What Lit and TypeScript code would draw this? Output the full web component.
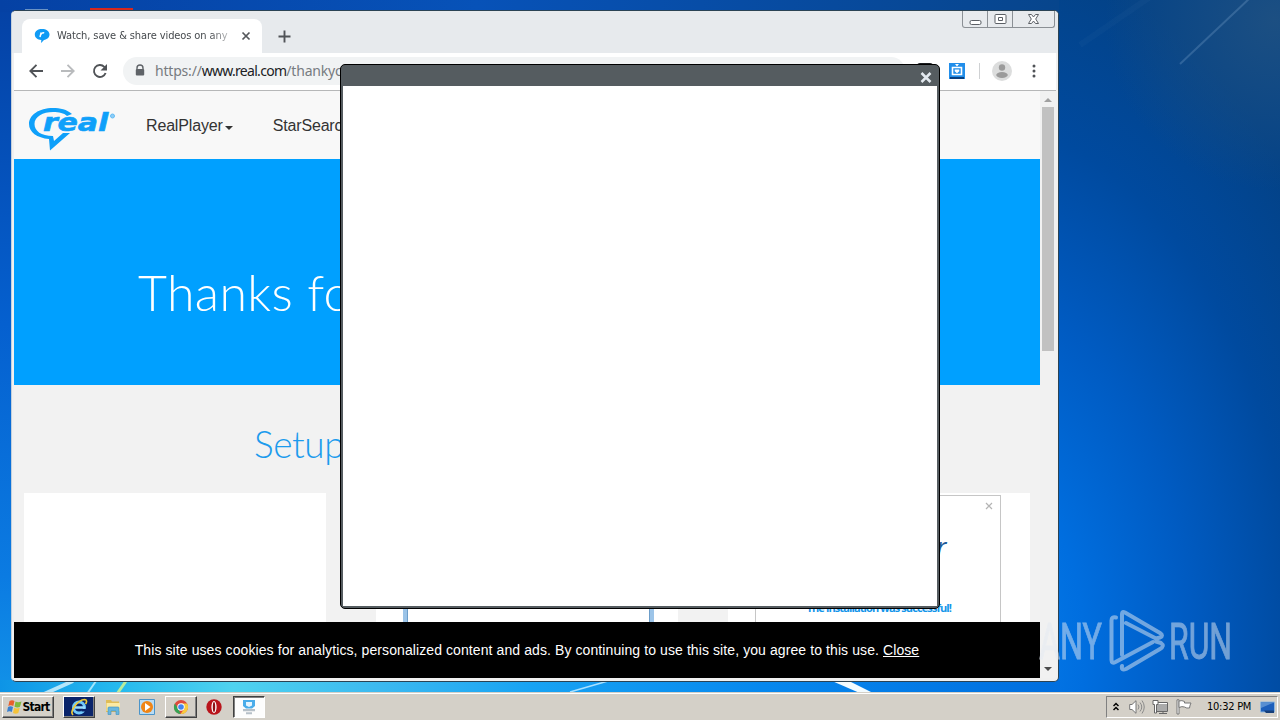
import { css, html, LitElement, svg } from "lit";
import { customElement } from "lit/decorators.js";

const backIcon = svg`<path d="M14 7H1.500M7.500 .8 1.300 7l6.200 6.200" fill="none" stroke="currentColor" stroke-width="1.900" />`;
const forwardIcon = svg`<path d="M0 7h12.500M6.500 .8 12.700 7l-6.200 6.200" fill="none" stroke="currentColor" stroke-width="1.900" />`;

@customElement("desktop-wallpaper")
class DesktopWallpaper extends LitElement {
  static override styles = css`
    :host,
    svg {
      display: block;
    }
  `;

  override render() {
    return html`
      <svg width="1280" height="720" viewBox="0 0 1280 720">
        <defs>
          <radialGradient id="base" gradientUnits="userSpaceOnUse" cx="0" cy="0" r="1" gradientTransform="translate(980 650) scale(420 700)">
            <stop offset="0" stop-color="#0780ee" />
            <stop offset=".25" stop-color="#006edf" />
            <stop offset=".5" stop-color="#005bc2" />
            <stop offset=".75" stop-color="#004a9f" />
            <stop offset="1" stop-color="#034287" />
          </radialGradient>
          <radialGradient id="corner" gradientUnits="userSpaceOnUse" cx="1275" cy="20" r="170">
            <stop offset="0" stop-color="#1c4f82" />
            <stop offset="1" stop-color="#1c4f82" stop-opacity="0" />
          </radialGradient>
          <linearGradient id="left" x2="0" y2="1">
            <stop offset="0" stop-color="#0541a4" />
            <stop offset=".45" stop-color="#0560cf" />
            <stop offset=".8" stop-color="#0b7be2" />
            <stop offset="1" stop-color="#1397e9" />
          </linearGradient>
          <linearGradient id="top">
            <stop offset="0" stop-color="#0541a4" />
            <stop offset=".45" stop-color="#0752b8" />
            <stop offset="1" stop-color="#07458c" />
          </linearGradient>
          <linearGradient id="bottom">
            <stop offset="0" stop-color="#0d94e6" />
            <stop offset=".11" stop-color="#25b9ee" />
            <stop offset=".22" stop-color="#4fd2ef" />
            <stop offset=".36" stop-color="#3cb9f0" />
            <stop offset=".5" stop-color="#18a3f3" />
            <stop offset=".72" stop-color="#0788ee" />
            <stop offset="1" stop-color="#006edf" />
          </linearGradient>
        </defs>
        <rect width="1280" height="720" fill="url(#base)" />
        <rect x="1000" width="280" height="300" fill="url(#corner)" />
        <rect width="14" height="720" fill="url(#left)" />
        <rect width="1059" height="12" fill="url(#top)" />
        <rect y="680" width="1060" height="14" fill="url(#bottom)" />
        <path d="M1180 64 1251-3" stroke="#7fa6cc" stroke-opacity=".3" stroke-width="2" />
        <path d="M1080 45 1150-3" stroke="#7fa6cc" stroke-opacity=".05" stroke-width="6" />
        <path d="M44 694 73 681" stroke="#e8fbff" stroke-width="4" stroke-opacity=".75" />
        <path d="m87 694 9-13" stroke="#c4f3ff" stroke-width="2" stroke-opacity=".8" />
        <path d="m117 694 9-13" stroke="#b9ec9d" stroke-width="3" />
        <path d="m570 692 38-11" stroke="#a9e0ff" stroke-width="1.500" />
        <path d="M832 681h17l26 13h-13z" fill="#f2fbff" />
        <rect x="90" y="8" width="43" height="3" fill="#d8281d" />
        <rect x="25" y="9" width="23" height="1" fill="#6b93c4" />
      </svg>
    `;
  }
}

@customElement("browser-window")
class BrowserWindow extends LitElement {
  static override styles = css`
    :host {
      display: block;
      box-sizing: border-box;
      width: 1048px;
      height: 672px;
      padding: 0 2px 3px;
      border: 1px solid #2b4354;
      border-left-color: #c3d0dc;
      border-radius: 5px;
      background: #f0f0f0;
      overflow: hidden;
      font-family: "Liberation Sans", Arial, sans-serif;
    }

    svg {
      display: block;
      flex: none;
    }

    .tabs {
      display: flex;
      align-items: flex-end;
      height: 42px;
      margin: 0 -2px;
      padding-left: 2px;
      background: #e7eaed;
    }

    .tab {
      display: flex;
      align-items: center;
      box-sizing: border-box;
      width: 240px;
      height: 34px;
      margin-left: 8px;
      padding: 0 10px 0 12px;
      border-radius: 8px 8px 0 0;
      background: #fff;
    }

    .title {
      width: 173px;
      margin-left: 7px;
      margin-right: 11px;
      overflow: hidden;
      white-space: nowrap;
      color: #45494d;
      font: 11px/16px "DejaVu Sans Condensed", "DejaVu Sans", sans-serif;
      letter-spacing: -0.1px;
      -webkit-mask-image: linear-gradient(90deg, #000 88%, rgba(0, 0, 0, 0.3));
    }

    .plus {
      margin: 0 0 10px 16px;
    }

    .controls {
      display: flex;
      align-self: flex-start;
      box-sizing: border-box;
      height: 17px;
      margin-left: auto;
      margin-right: 3px;
      border: 1px solid #8b9095;
      border-top: 0;
      border-radius: 0 0 3px 3px;
    }

    .controls span {
      display: grid;
      place-items: center;
      width: 24px;
    }

    .controls span + span {
      border-left: 1px solid #8b9095;
    }

    .controls .quit {
      width: 41px;
    }

    .toolbar {
      display: flex;
      align-items: center;
      box-sizing: border-box;
      height: 38px;
      padding: 0 16px 2px 15px;
      border-bottom: 1px solid #b6b7b8;
      background: #fff;
      color: #505357;
    }

    .toolbar .forward {
      margin-left: 18px;
      color: #b9bbbd;
    }

    .toolbar .reload {
      margin-left: 17px;
    }

    .address {
      display: flex;
      align-items: center;
      box-sizing: border-box;
      width: 782px;
      height: 28px;
      margin-left: 15px;
      padding-left: 11px;
      border-radius: 14px;
      background: #f1f3f4;
      color: #777b80;
      font: 14px/20px "Noto Sans", sans-serif;
      letter-spacing: -0.2px;
      white-space: nowrap;
      overflow: hidden;
    }

    .address span {
      margin-left: 9px;
    }

    .address b {
      color: #202124;
      font-weight: 400;
      letter-spacing: -0.7px;
    }

    .black {
      width: 16px;
      height: 16px;
      margin-left: 12px;
      border-radius: 3px;
      background: #1b1d20;
    }

    .extension {
      margin-left: 16px;
    }

    .divider {
      width: 1px;
      height: 16px;
      margin: 0 12px 0 14px;
      background: #cfd1d3;
    }

    .menu {
      margin-left: 20px;
    }

    .content {
      display: flex;
      height: 587px;
    }

    .page {
      display: flex;
      flex-direction: column;
      width: 1026px;
      background: #f2f2f2;
      overflow: hidden;
    }

    .nav {
      display: flex;
      align-items: center;
      flex: none;
      box-sizing: border-box;
      height: 68px;
      padding: 2px 0 0 14px;
      background: #f8f8f8;
      color: #333;
      font-size: 16px;
      letter-spacing: -0.16px;
    }

    .logo {
      margin-top: 6px;
    }

    .nav span {
      margin-left: 29px;
    }

    .nav .caret {
      width: 0;
      margin: 3px 0 0 2px;
      border: 4px solid transparent;
      border-top-color: #333;
      border-bottom: 0;
    }

    .nav .search {
      margin-left: 40px;
    }

    .hero {
      flex: none;
      box-sizing: border-box;
      height: 226px;
      padding: 103px 0 0 124px;
      background: #00a0ff;
      color: #fff;
      font: 300 50px/60px Lato, sans-serif;
      letter-spacing: 0.4px;
      white-space: nowrap;
    }

    h2 {
      flex: none;
      height: 70px;
      margin: 0;
      padding: 38px 0 0 240px;
      color: #1c9bed;
      font: 300 37px/42px Lato, sans-serif;
      letter-spacing: -0.4px;
    }

    .cards {
      display: grid;
      grid-template-columns: repeat(3, 302px);
      gap: 50px;
      height: 129px;
      padding-left: 10px;
    }

    .card {
      display: flex;
      justify-content: center;
      background: #fff;
      overflow: hidden;
    }

    .installer {
      width: 243px;
      margin-left: 2px;
      border: solid #9cc4e8;
      border-width: 0 4px;
      box-shadow: inset 1px 0 #6c9dc9, inset -1px 0 #6c9dc9;
    }

    .success {
      display: flex;
      flex-direction: column;
      box-sizing: border-box;
      width: 246px;
      margin: 2px 3px 0 0;
      border: 1px solid #c6c6c6;
      border-bottom: 0;
      color: #1596ea;
      font: 700 11px/14px "Open Sans", sans-serif;
    }

    .success .close {
      align-self: flex-end;
      margin: 6px 7px 0 0;
    }

    .success .brand {
      margin: 18px 53px 0 0;
      text-align: right;
      color: #1d5a99;
      font: italic 400 25px/36px "Open Sans", sans-serif;
    }

    .success .message {
      margin-top: 37px;
      padding-left: 51px;
      letter-spacing: -0.88px;
      white-space: nowrap;
    }

    .cookies {
      flex: none;
      height: 56px;
      background: #000;
      color: #fff;
      font-size: 14px;
      line-height: 56px;
      text-align: center;
      white-space: nowrap;
      letter-spacing: 0.092px;
    }

    .scrollbar {
      display: flex;
      flex-direction: column;
      align-items: center;
      box-sizing: border-box;
      width: 16px;
      padding: 7px 0 7px;
      background: #f1f1f1;
    }

    .thumb {
      width: 12px;
      height: 244px;
      margin: 5px 0 auto;
      background: #c1c1c1;
    }
  `;

  private renderTabs() {
    return html`
      <div class="tabs">
        <div class="tab">
          <svg width="16" height="16" viewBox="0 0 16 16">
            <path d="M8 1c4 0 7.500 2 7.500 5.500 0 3-2.500 5-5.500 5.400L7 15l.3-3C3.500 12 .8 9.700.8 6.600.8 3 4 1 8 1" fill="#109bf5" />
            <path d="m6 9 1.200-4.500M7 6.300c1-1.500 2-1.700 3.200-1.300" fill="none" stroke="#fff" stroke-width="1.500" />
          </svg>
          <span class="title">Watch, save &amp; share videos on any</span>
          <svg width="10" height="10" viewBox="0 0 10 10">
            <path d="m1.500 1.500 7 7m0-7-7 7" stroke="#55585c" stroke-width="1.700" />
          </svg>
        </div>
        <svg class="plus" width="13" height="13" viewBox="0 0 13 13">
          <path d="M6.500 .5v12m-6-6h12" stroke="#505357" stroke-width="1.900" />
        </svg>
        <div class="controls">
          <span>
            <svg width="13" height="13" viewBox="0 0 13 13">
              <rect x="1" y="7.500" width="11" height="4" rx="1.500" fill="#fff" stroke="#5c6066" />
            </svg>
          </span>
          <span>
            <svg width="13" height="11" viewBox="0 0 13 11">
              <rect x="1" y=".5" width="11" height="9" rx="1" fill="#fff" stroke="#5c6066" />
              <path d="M4.500 3.500h4v3h-4z" fill="none" stroke="#5c6066" />
            </svg>
          </span>
          <span class="quit">
            <svg width="13" height="11" viewBox="0 0 13 11">
              <path d="M1.500 .5h3l2 2.500 2-2.500h3L8.700 5l2.800 4.500h-3l-2-2.500-2 2.500h-3L4.300 5z" fill="#fff" stroke="#5c6066" />
            </svg>
          </span>
        </div>
      </div>
    `;
  }

  private renderToolbar() {
    return html`
      <div class="toolbar">
        <svg width="14" height="14" viewBox="0 0 14 14">${backIcon}</svg>
        <svg class="forward" width="14" height="14" viewBox="0 0 14 14">${forwardIcon}</svg>
        <svg class="reload" width="16" height="16" viewBox="0 0 16 16">
          <path d="M13.600 10A6 6 0 1 1 12.300 3.800L14 5.500" fill="none" stroke="currentColor" stroke-width="1.900" />
          <path d="M15 1v6.500H8.500z" fill="currentColor" />
        </svg>
        <div class="address">
          <svg width="12" height="13" viewBox="0 0 12 13">
            <path d="M3 5.500V4a3 3 0 0 1 6 0v1.500" fill="none" stroke="#5f6368" stroke-width="1.400" />
            <rect x="1.800" y="5" width="8.400" height="6.500" rx="1" fill="#5f6368" />
          </svg>
          <span>https://<b>www.real.com</b>/thankyou</span>
        </div>
        <div class="black"></div>
        <svg class="extension" width="16" height="16" viewBox="0 0 16 16">
          <path d="M0 0h16v16H0z" fill="#218eea" />
          <path d="M1 14h14v2H1z" fill="#073f80" />
          <path d="M3.500 4.500h9v7h-9z" fill="none" stroke="#fff" stroke-width="1.600" />
          <path d="m6 1 2 2.500L10 1M5.700 6.500h4.600v1.800L8 10.200 5.700 8.300z" fill="#fff" />
        </svg>
        <div class="divider"></div>
        <svg width="20" height="20" viewBox="0 0 20 20">
          <circle cx="10" cy="10" r="10" fill="#dcdddd" />
          <circle cx="10" cy="6.500" r="3.200" fill="#9b9b9b" />
          <ellipse cx="10" cy="14" rx="5.800" ry="2.900" fill="#9b9b9b" />
        </svg>
        <svg class="menu" width="4" height="14" viewBox="0 0 4 14">
          <circle cx="2" cy="2" r="1.500" fill="currentColor" />
          <circle cx="2" cy="7" r="1.500" fill="currentColor" />
          <circle cx="2" cy="12" r="1.500" fill="currentColor" />
        </svg>
      </div>
    `;
  }

  private renderLogo() {
    return html`
      <svg class="logo" width="89" height="46" viewBox="0 0 89 46">
        <path d="M44 8C39 3.500 32 2 25 2 11 2 1 9 1 18c0 8 8 14 20 15l1 11.500L42 27h-7l-9 8-1-5C13 30 6.500 25 6.500 18 6.500 10.500 15 6 25 6c6 0 11 1 14 4z" fill="#0fa0fa" />
        <text x="15" y="25" fill="#0fa0fa" stroke="#0fa0fa" stroke-width=".6" font-family="DejaVu Sans, sans-serif" font-size="25" font-weight="700" font-style="italic" textLength="65" lengthAdjust="spacingAndGlyphs">real</text>
        <circle cx="84.500" cy="10" r="2" fill="#8fcdf7" stroke="#64bdf5" />
      </svg>
    `;
  }

  private renderPage() {
    return html`
      <div class="page">
        <div class="nav">
          ${this.renderLogo()}
          <span>RealPlayer</span>
          <i class="caret"></i>
          <span class="search">StarSearch</span>
        </div>
        <div class="hero">Thanks for</div>
        <h2>Setup</h2>
        <div class="cards">
          <div class="card"></div>
          <div class="card"><div class="installer"></div></div>
          <div class="card">
            <div class="success">
              <svg class="close" width="8" height="8" viewBox="0 0 8 8">
                <path d="m1 1 6 6m0-6-6 6" stroke="#b4b4b4" stroke-width="1.200" />
              </svg>
              <div class="brand">r</div>
              <div class="message">The installation was successful!</div>
            </div>
          </div>
        </div>
        <div class="cookies">
          This site uses cookies for analytics, personalized content and ads. By continuing to use this site, you agree to this use. <u>Close</u>
        </div>
      </div>
    `;
  }

  override render() {
    return html`
      ${this.renderTabs()} ${this.renderToolbar()}
      <div class="content">
        ${this.renderPage()}
        <div class="scrollbar">
          <svg width="8" height="4" viewBox="0 0 8 4"><path d="m0 4 4-4 4 4z" fill="#a0a0a0" /></svg>
          <div class="thumb"></div>
          <svg width="8" height="4" viewBox="0 0 8 4"><path d="m0 0 4 4 4-4z" fill="#4d4d4d" /></svg>
        </div>
      </div>
    `;
  }
}

@customElement("blank-dialog")
class BlankDialog extends LitElement {
  static override styles = css`
    :host {
      display: flex;
      flex-direction: column;
      box-sizing: border-box;
      width: 600px;
      height: 545px;
      border: 1px solid #000;
      border-radius: 5px;
      background: #555c60;
      overflow: hidden;
    }

    .bar {
      display: flex;
      align-items: center;
      justify-content: flex-end;
      height: 21px;
      padding: 3px 7px 0 0;
      box-sizing: border-box;
    }

    .body {
      flex: 1;
      margin: 0 2px 2px;
      background: #fff;
    }
  `;

  override render() {
    return html`
      <div class="bar">
        <svg width="12" height="11" viewBox="0 0 12 11">
          <path d="m1.500 1 9 9m0-9-9 9" stroke="#e3e9ef" stroke-width="2.500" />
        </svg>
      </div>
      <div class="body"></div>
    `;
  }
}

@customElement("task-bar")
class TaskBar extends LitElement {
  static override styles = css`
    :host {
      display: flex;
      align-items: center;
      box-sizing: border-box;
      height: 28px;
      padding: 1px 2px 0;
      border-top: 1px solid #d4d0c8;
      background: #d4d0c8;
      box-shadow: inset 0 1px #fff;
      color: #000;
      font: 11px/14px "DejaVu Sans Condensed", "DejaVu Sans", sans-serif;
    }

    svg {
      display: block;
      flex: none;
    }

    .raised,
    .pressed {
      display: flex;
      align-items: center;
      justify-content: center;
      box-sizing: border-box;
      width: 32px;
      height: 22px;
      border: 1px solid;
      border-color: #fff #404040 #404040 #fff;
      box-shadow: inset -1px -1px #808080;
    }

    .start {
      gap: 1px;
      width: 52px;
      margin-right: 9px;
      font-size: 12px;
      font-weight: 700;
      letter-spacing: -0.75px;
    }

    .dark {
      background: #0a246a;
    }

    .pressed {
      margin-left: 10px;
      border-color: #404040 #fff #fff #404040;
      box-shadow: inset 1px 1px #808080;
      background: #fdfdfd;
    }

    .launch {
      display: flex;
      gap: 18px;
      margin: 0 10px;
    }

    .opera {
      margin-left: 9px;
      margin-right: 1px;
    }

    .tray {
      display: flex;
      align-items: center;
      box-sizing: border-box;
      width: 172px;
      height: 22px;
      margin-left: auto;
      padding: 0 2px 0 6px;
      border: 1px solid;
      border-color: #808080 #fff #fff #808080;
    }

    .volume {
      margin-left: 10px;
    }

    .network,
    .flag {
      margin-left: 7px;
    }

    .clock {
      width: 46px;
      margin-left: auto;
      margin-right: 7px;
      letter-spacing: -0.25px;
      white-space: nowrap;
    }
  `;

  private renderLaunchers() {
    return html`
      <div class="raised dark">
        <svg width="18" height="18" viewBox="0 0 18 18">
          <circle cx="9" cy="9.500" r="5.500" fill="none" stroke="#70c8fa" stroke-width="3" />
          <path d="M5 9.500h10" stroke="#9bddff" stroke-width="2.500" />
          <path d="M11.500 11h5v2.500h-5z" fill="#0a246a" />
          <path d="M3 17C-1 13 8 2 14.500 1.500 17 1.500 17 4 15.500 6" fill="none" stroke="#f0c936" stroke-width="1.700" />
        </svg>
      </div>
      <div class="launch">
        <svg width="16" height="16" viewBox="0 0 16 16">
          <path d="M1 1h5l1 1.500h7V13H1z" fill="#e0bd58" />
          <path d="M1.500 4h13.500v8H1.500z" fill="#fbeaa4" />
          <path d="M3 15.500V9q0-1 1-1h9q1 0 1 1v6.500h-3V12H6v3.500z" fill="#69b7de" stroke="#3d8fbe" stroke-width=".6" />
        </svg>
        <svg width="16" height="16" viewBox="0 0 16 16">
          <path d="M.5 .5h15v15H.5z" fill="#b9dcf4" stroke="#4b94c9" />
          <circle cx="8" cy="8" r="6" fill="#f08516" />
          <path d="m6 4 5.500 4L6 12z" fill="#fff" />
        </svg>
      </div>
      <div class="raised">
        <svg width="16" height="16" viewBox="0 0 16 16">
          <circle cx="8" cy="8" r="7" fill="#de4a3c" />
          <path d="M1.800 4.600 6 11l1.500 4A7 7 0 0 1 1.800 4.600" fill="#34a353" />
          <path d="M8 4.500h6.100A7 7 0 0 1 7.500 15l4-5.500z" fill="#f8cc3d" />
          <circle cx="8" cy="8" r="3.700" fill="#fff" />
          <circle cx="8" cy="8" r="2.800" fill="#4384ee" />
        </svg>
      </div>
      <svg class="opera" width="16" height="16" viewBox="0 0 16 16">
        <circle cx="8" cy="8" r="7.700" fill="#b9141b" />
        <ellipse cx="8" cy="8" rx="2.600" ry="6" fill="#fff" />
        <ellipse cx="8" cy="8" rx="1.200" ry="5" fill="#8f1015" />
      </svg>
      <div class="pressed">
        <svg width="16" height="16" viewBox="0 0 16 16">
          <path d="M2 1h12v6l-3 2.500H5L2 7z" fill="#4badea" />
          <path d="M5 3h6v3.500L8 8 5 6.500z" fill="#e6f5ff" />
          <path d="M2 10h12v2.200H2zm3 3.200h6v2H5z" fill="#b6c0c8" />
        </svg>
      </div>
    `;
  }

  private renderTray() {
    return html`
      <div class="tray">
        <svg width="6" height="11" viewBox="0 0 6 11">
          <path d="m.5 4 2.500-2.500L5.500 4m-5 4L3 5.500 5.500 8" fill="none" stroke="#000" stroke-width="1.500" />
        </svg>
        <svg class="volume" width="16" height="16" viewBox="0 0 16 16">
          <path d="M.7 5.500H3L7 1.700v12.600L3 10.500H.7z" fill="#fff" stroke="#777" />
          <path d="M9 5.500q2 2.500 0 5m2-7q3.500 4.500 0 9m2-11q4.500 6.500 0 13" fill="none" stroke="#8a8a8a" />
        </svg>
        <svg class="network" width="17" height="16" viewBox="0 0 17 16">
          <path d="M4.500 4.500h11v8h-11z" fill="#aaa" stroke="#fff" />
          <path d="M3.500 3.500h12v9h-12zM7 14.500h8M11 12v2" fill="none" stroke="#666" />
          <path d="M1 1.500h5v4H4.500V14h-2V5.500H1z" fill="#fff" stroke="#666" />
        </svg>
        <svg class="flag" width="17" height="16" viewBox="0 0 17 16">
          <path d="M1 .8h2V15H1z" fill="#fff" stroke="#777" />
          <path d="M3 2q3-1 5.500.5V4H15q-1 1.500-1.500 5-3 .5-5-1Q6 7 3 8.500z" fill="#fff" stroke="#777" />
        </svg>
        <span class="clock">10:32 PM</span>
        <svg width="15" height="13" viewBox="0 0 15 13">
          <path d="M.5 1h14v10H.5z" fill="#1d5fbb" stroke="#8eb6dc" />
          <path d="M1 1.500h13L1 7z" fill="#588fd2" />
          <path d="M4 9.500h10v2.500H6z" fill="#153e79" />
        </svg>
      </div>
    `;
  }

  override render() {
    return html`
      <div class="raised start">
        <svg width="15" height="16" viewBox="0 0 15 16">
          <path d="M2.500 2q2.500-1.700 5 0L6.300 7q-2.500-1.500-5 0z" fill="#e85f2c" />
          <path d="M8.500 2.500q2.500 1.500 6 0L13 7.700q-2.500 1.500-5.500 0z" fill="#7fb93c" />
          <path d="M1 8q2.500-1.500 5 0L4.800 13Q2.500 11.500 0 13z" fill="#3b80cf" />
          <path d="M7.200 8.700q2.500 1.500 5.500 0L11.300 14q-2.500 1.500-5.300 0z" fill="#f5c33a" />
        </svg>
        <span>Start</span>
      </div>
      ${this.renderLaunchers()} ${this.renderTray()}
    `;
  }
}

@customElement("app-root")
class AppRoot extends LitElement {
  static override styles = css`
    :host {
      display: block;
      position: relative;
      width: 1280px;
      height: 720px;
      overflow: hidden;
    }

    browser-window,
    blank-dialog,
    task-bar,
    .watermark {
      position: absolute;
    }

    browser-window {
      left: 11px;
      top: 10px;
    }

    blank-dialog {
      left: 340px;
      top: 64px;
    }

    task-bar {
      left: 0;
      right: 0;
      bottom: 0;
    }

    .watermark {
      left: 1038px;
      top: 606px;
      opacity: 0.5;
    }
  `;

  override render() {
    return html`
      <desktop-wallpaper></desktop-wallpaper>
      <browser-window></browser-window>
      <blank-dialog></blank-dialog>
      <svg class="watermark" width="220" height="80" viewBox="0 0 220 80">
        <g fill="#e4eaf2" stroke="#e4eaf2" stroke-width=".9" font-family="Roboto, sans-serif" font-size="50">
          <text x="1" y="53" textLength="63" lengthAdjust="spacingAndGlyphs">ANY</text>
          <text x="131" y="53" textLength="63" lengthAdjust="spacingAndGlyphs">RUN</text>
        </g>
        <g fill="none" stroke="#e4eaf2" stroke-width="4" stroke-linejoin="round" stroke-linecap="round">
          <path d="M78 11.500q-4.500-1-4.500 3V54q0 4 4 2L115 36" />
          <path d="M84 49V8q0-3 3-1.500L122 27q4 2.500 0 4.500l-4 1L88 17" />
          <path d="M84 60q-1 5 4 3l34-20q5-3 1-6l-5-1.500" />
        </g>
      </svg>
      <task-bar></task-bar>
    `;
  }
}

declare global {
  interface HTMLElementTagNameMap {
    "app-root": AppRoot;
    "desktop-wallpaper": DesktopWallpaper;
    "browser-window": BrowserWindow;
    "blank-dialog": BlankDialog;
    "task-bar": TaskBar;
  }
}

export default AppRoot;
